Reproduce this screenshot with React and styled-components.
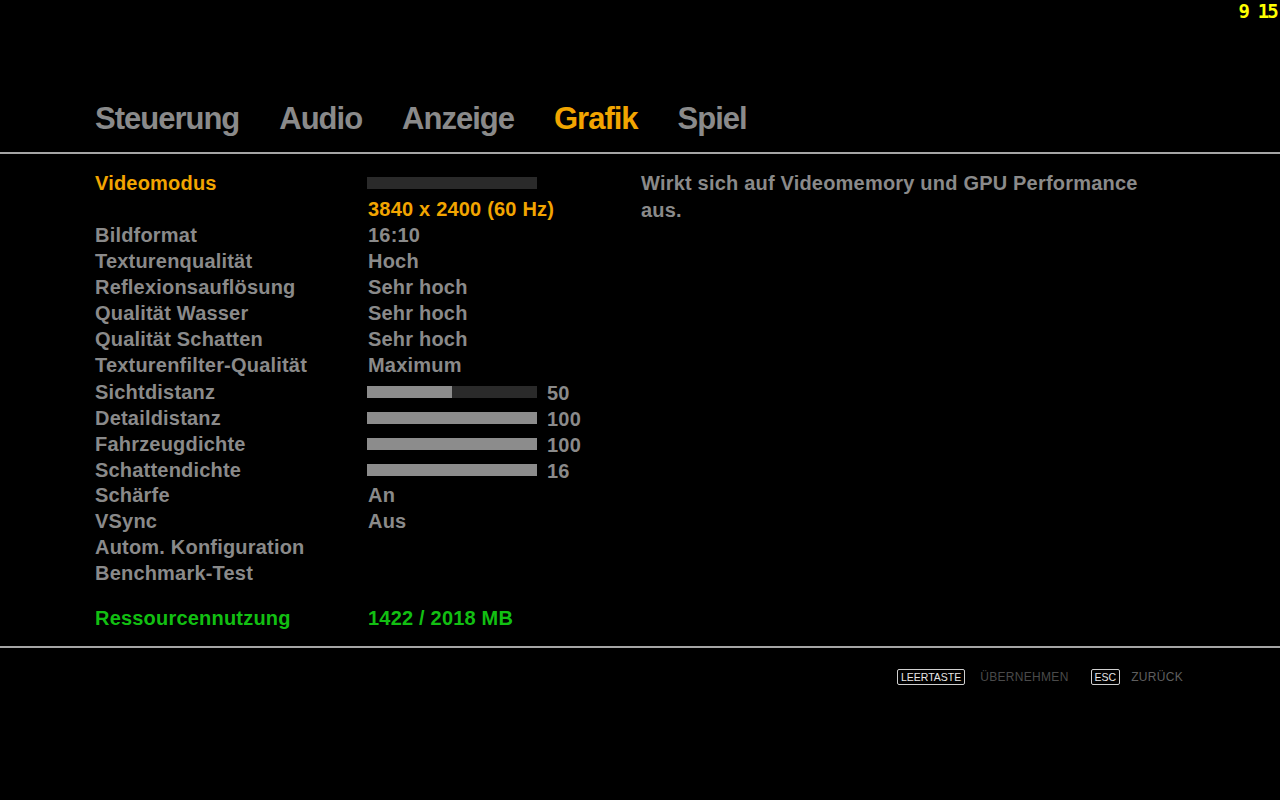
import React from 'react';
import styled, { createGlobalStyle } from 'styled-components';

const tabs = ['Steuerung', 'Audio', 'Anzeige', 'Grafik', 'Spiel'];

const settings = [
  { label: 'Bildformat', value: '16:10' },
  { label: 'Texturenqualität', value: 'Hoch' },
  { label: 'Reflexionsauflösung', value: 'Sehr hoch' },
  { label: 'Qualität Wasser', value: 'Sehr hoch' },
  { label: 'Qualität Schatten', value: 'Sehr hoch' },
  { label: 'Texturenfilter-Qualität', value: 'Maximum' },
  { label: 'Sichtdistanz', slider: 50, max: 100 },
  { label: 'Detaildistanz', slider: 100, max: 100 },
  { label: 'Fahrzeugdichte', slider: 100, max: 100 },
  { label: 'Schattendichte', slider: 16, max: 16 },
  { label: 'Schärfe', value: 'An' },
  { label: 'VSync', value: 'Aus' },
  { label: 'Autom. Konfiguration' },
  { label: 'Benchmark-Test' },
];

const App = () => {
  return (
    <Screen>
      <GlobalStyle />
      <Clock>9 15</Clock>

      <TabBar>
        {tabs.map((t) => (
          <Tab key={t} $active={t === 'Grafik'}>{t}</Tab>
        ))}
      </TabBar>

      <Content>
        <SettingsList>
          <Row>
            <Label $tone="orange">Videomodus</Label>
            <ValueCell>
              <Track />
            </ValueCell>
          </Row>
          <Row>
            <Label />
            <Value $tone="orange">3840 x 2400 (60 Hz)</Value>
          </Row>
          {settings.map((s) => (
            <Row key={s.label}>
              <Label>{s.label}</Label>
              {s.slider !== undefined ? (
                <ValueCell>
                  <Track>
                    <Fill style={{ width: `${(s.slider / s.max) * 100}%` }} />
                  </Track>
                  <SliderNum>{s.slider}</SliderNum>
                </ValueCell>
              ) : (
                <Value>{s.value}</Value>
              )}
            </Row>
          ))}
          <Row $spaced>
            <Label $tone="green">Ressourcennutzung</Label>
            <Value $tone="green">1422 / 2018 MB</Value>
          </Row>
        </SettingsList>

        <Description>Wirkt sich auf Videomemory und GPU Performance aus.</Description>
      </Content>

      <Footer>
        <Hint $gap={15}>
          <Key>LEERTASTE</Key>
          <HintText>ÜBERNEHMEN</HintText>
        </Hint>
        <Hint $gap={11}>
          <Key>ESC</Key>
          <HintText $bright>ZURÜCK</HintText>
        </Hint>
      </Footer>
    </Screen>
  );
};

const colors = {
  gray: '#8a8a8a',
  orange: '#f2a500',
  green: '#12bf12',
};

const GlobalStyle = createGlobalStyle`
  html, body {
    margin: 0;
    padding: 0;
    background: #000;
  }
`;

const Screen = styled.div`
  position: relative;
  width: 1280px;
  height: 800px;
  background: #000;
  font-family: "Liberation Sans", Arial, sans-serif;
  font-weight: bold;
  overflow: hidden;
`;

const Clock = styled.div`
  position: absolute;
  top: 0;
  right: 3px;
  color: #ffff00;
  font-family: "DejaVu Sans Mono", monospace;
  font-size: 19px;
  line-height: 22px;
  letter-spacing: -1.8px;
`;

const TabBar = styled.div`
  display: flex;
  gap: 40px;
  padding: 100px 0 0 95px;
  height: 52px;
  border-bottom: 2px solid #a5a5a5;
`;

const Tab = styled.div`
  font-size: 31px;
  line-height: 38px;
  letter-spacing: -1px;
  color: ${(p) => (p.$active ? colors.orange : colors.gray)};
`;

const Content = styled.div`
  display: flex;
  padding: 16px 0 13px 95px;
  height: 463px;
  border-bottom: 2px solid #a5a5a5;
`;

const SettingsList = styled.div`
  width: 546px;
  display: flex;
  flex-direction: column;
`;

const Row = styled.div`
  display: grid;
  grid-template-columns: 273px 273px;
  height: 26px;
  align-items: center;
  margin-top: ${(p) => (p.$spaced ? '19px' : '0')};
`;

const Label = styled.div`
  font-size: 20px;
  line-height: 26px;
  letter-spacing: 0.2px;
  color: ${(p) => colors[p.$tone] || colors.gray};
`;

const Value = styled(Label)``;

const ValueCell = styled.div`
  display: flex;
  align-items: center;
  gap: 10px;
`;

const Track = styled.div`
  width: 170px;
  height: 12px;
  margin-left: -1px;
  background: #2a2a2a;
  display: flex;
`;

const Fill = styled.div`
  height: 100%;
  background: #8c8c8c;
`;

const SliderNum = styled.div`
  font-size: 20px;
  line-height: 26px;
  margin-top: 2px;
  letter-spacing: 0.2px;
  color: ${colors.gray};
`;

const Description = styled.div`
  width: 510px;
  font-size: 20px;
  line-height: 27px;
  letter-spacing: 0.2px;
  color: ${colors.gray};
`;

const Footer = styled.div`
  display: flex;
  justify-content: flex-end;
  gap: 22px;
  padding: 21px 97px 0 0;
`;

const Hint = styled.div`
  display: flex;
  align-items: center;
  gap: ${(p) => p.$gap}px;
  font-family: "Liberation Sans", sans-serif;
  font-weight: normal;
  font-size: 12px;
`;

const Key = styled.span`
  color: #e6e6e6;
  border: 1px solid #d0d0d0;
  border-radius: 2px;
  padding: 0 3px;
  line-height: 14px;
  font-size: 10.5px;
`;

const HintText = styled.span`
  letter-spacing: 0.3px;
  color: ${(p) => (p.$bright ? '#5f5f5f' : '#4a4a4a')};
`;

export default App;
